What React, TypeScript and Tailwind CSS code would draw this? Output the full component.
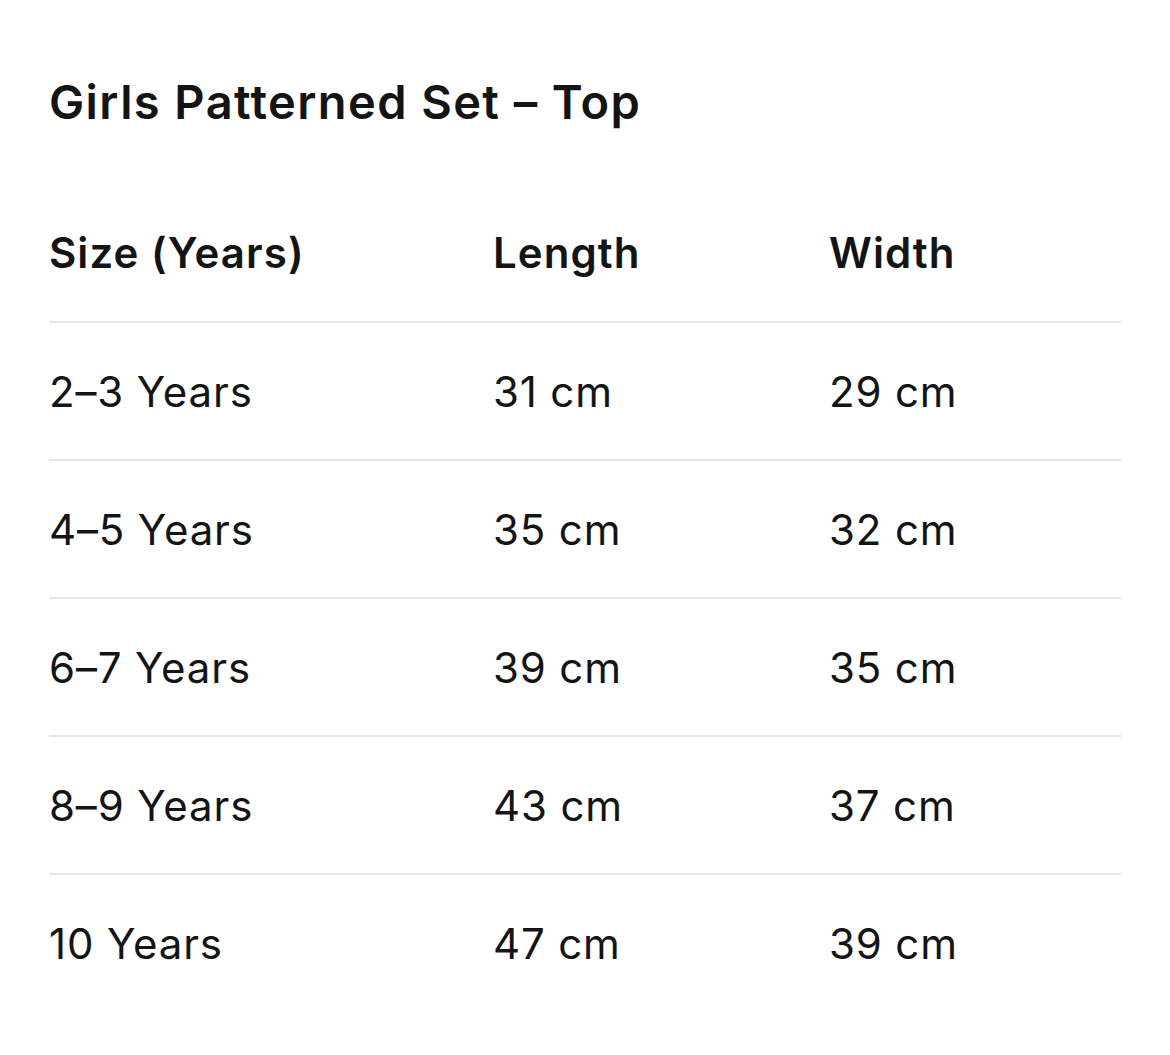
import React from 'react';

const rows = [
  { size: '2–3 Years', length: '31 cm', width: '29 cm' },
  { size: '4–5 Years', length: '35 cm', width: '32 cm' },
  { size: '6–7 Years', length: '39 cm', width: '35 cm' },
  { size: '8–9 Years', length: '43 cm', width: '37 cm' },
  { size: '10 Years', length: '47 cm', width: '39 cm' },
];

export default function App() {
  return (
    <div
      className="min-h-screen bg-white text-[#141414] px-[49px] pt-[72px]"
      style={{ fontFamily: 'Inter, "Noto Sans", sans-serif' }}
    >
      <h1 className="text-[47px] leading-[60px] font-semibold tracking-[0.03em]">
        Girls Patterned Set – Top
      </h1>

      <div className="mt-[51px]">
        <div className="grid grid-cols-[444px_336px_1fr] items-center h-[138px] text-[42px] font-semibold tracking-[0.025em]">
          <div>Size (Years)</div>
          <div>Length</div>
          <div>Width</div>
        </div>
        {rows.map((r) => (
          <div
            key={r.size}
            className="grid grid-cols-[444px_336px_1fr] items-center h-[138px] border-t-2 border-[#e6e6e6] text-[42px] tracking-[0.02em]"
          >
            <div>{r.size}</div>
            <div>{r.length}</div>
            <div>{r.width}</div>
          </div>
        ))}
      </div>
    </div>
  );
}
